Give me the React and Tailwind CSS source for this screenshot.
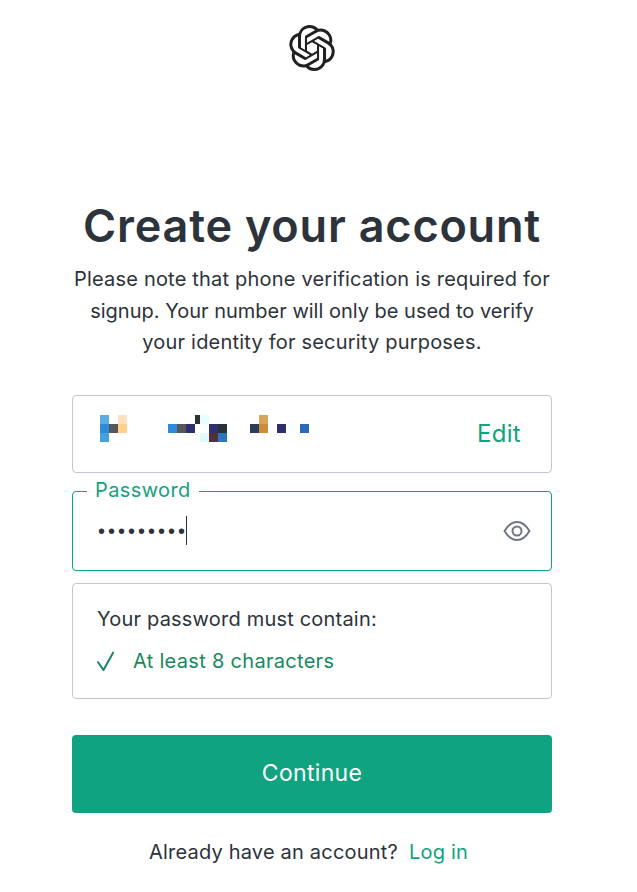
import React from "react";
import { SiOpenai } from "react-icons/si";

const PIXELS = [
  [28, 0, "#5dade2"], [46, 0, "#ffe0c0"],
  [28, 9, "#2e8bd8"], [37, 9, "#54585c"], [46, 9, "#ffd08a"],
  [28, 18, "#45a0de"],
  [96, 9, "#2e8bd8"], [105, 9, "#54585c"], [114, 9, "#2e2e70"],
  [123, 0, "#2a3238"], [128, 0, "#e5ffff"],
  [137, 9, "#2e2e70"], [146, 9, "#2a3238"],
  [128, 18, "#e0f8ff"], [137, 18, "#50303a"], [146, 18, "#2e75c0"],
  [178, 9, "#2a3e5c"], [187, 0, "#d8a45c"], [187, 9, "#cc8c38"],
  [205, 9, "#2e2e70"], [228, 9, "#2a6ab8"],
];

const App = () => {
  return (
    <div className="min-h-screen bg-white pr-[13px] flex flex-col items-center font-['Inter',sans-serif] text-[#2d333a]">
      <SiOpenai className="mt-[25px] w-[46px] h-[46px] text-[#202123]" />

      <h1 className="mt-[126px] text-[45px] leading-[58px] font-semibold tracking-[0.8px] text-[#2d333a] whitespace-nowrap">
        Create your account
      </h1>
      <p className="mt-[9px] w-[480px] text-center text-[20px] leading-[31.5px] tracking-[0.2px] text-[#2d333a]">
        Please note that phone verification is required for
        <br />
        <span className="tracking-normal">signup. Your number will only be used to verify</span>
        <br />
        your identity for security purposes.
      </p>

      <div className="mt-[36px] w-[480px] flex flex-col">
        {/* Email, pixelated in the source */}
        <div className="h-[78px] border border-[#c2c8d0] rounded-[4px] flex items-center justify-between pr-[30px]">
          <svg width="260" height="27" className="-mt-[10px] -ml-px">
            {PIXELS.map(([x, y, fill], i) => (
              <rect key={i} x={x} y={y} width="9" height="9" fill={fill} />
            ))}
          </svg>
          <span className="text-[24px] tracking-[0.3px] text-[#10a37f]">Edit</span>
        </div>

        {/* Password */}
        <div className="relative mt-[18px] h-[80px] border border-[#10a37f] rounded-[4px] flex items-center justify-between pl-[25px] pr-[20px]">
          <span className="absolute -top-[14px] left-[14px] bg-white px-[8px] text-[20px] leading-[24px] tracking-[0.4px] text-[#10a37f]">
            Password
          </span>
          <div className="flex items-center">
            <span className="font-['Liberation_Sans',sans-serif] text-[20px] tracking-[3px] text-[#2d333a]">
              •••••••••
            </span>
            <span className="w-px h-[29px] bg-[#2d333a] -ml-[2px]"></span>
          </div>
          <svg width="28" height="22" viewBox="0 0 28 22" fill="none" stroke="#6e7681" strokeWidth="2">
            <path d="M1.5 11C5 5.2 9.2 2 14 2s9 3.2 12.5 9C23 16.800 18.800 20 14 20S5 16.800 1.500 11Z" strokeLinejoin="round" />
            <circle cx="14" cy="11" r="4.500" />
          </svg>
        </div>

        {/* Requirements */}
        <div className="mt-[12px] h-[116px] border border-[#c2c8d0] rounded-[4px] px-[24px] pt-[21px]">
          <div className="text-[20px] leading-[28px] tracking-[0.2px] text-[#2d333a]">Your password must contain:</div>
          <div className="mt-[14px] flex items-center text-[20px] leading-[28px] tracking-[0.3px] text-[#168a5e]">
            <svg width="18" height="20" viewBox="0 0 18 20" fill="none" stroke="#168a5e" strokeWidth="2" className="mr-[18px]">
              <path d="M0.500 10.500l6 8.500L16.500 1" />
            </svg>
            At least 8 characters
          </div>
        </div>

        <button className="mt-[36px] h-[78px] rounded-[4px] bg-[#10a37f] text-white text-[23px] font-normal tracking-[0.3px]">
          Continue
        </button>
      </div>

      <p className="mt-[25px] mr-[7px] text-[20px] leading-[28px] tracking-[0.2px] text-[#2d333a]">
        Already have an account?<span className="text-[#10a37f] ml-[11px]">Log in</span>
      </p>
    </div>
  );
};

export default App;
